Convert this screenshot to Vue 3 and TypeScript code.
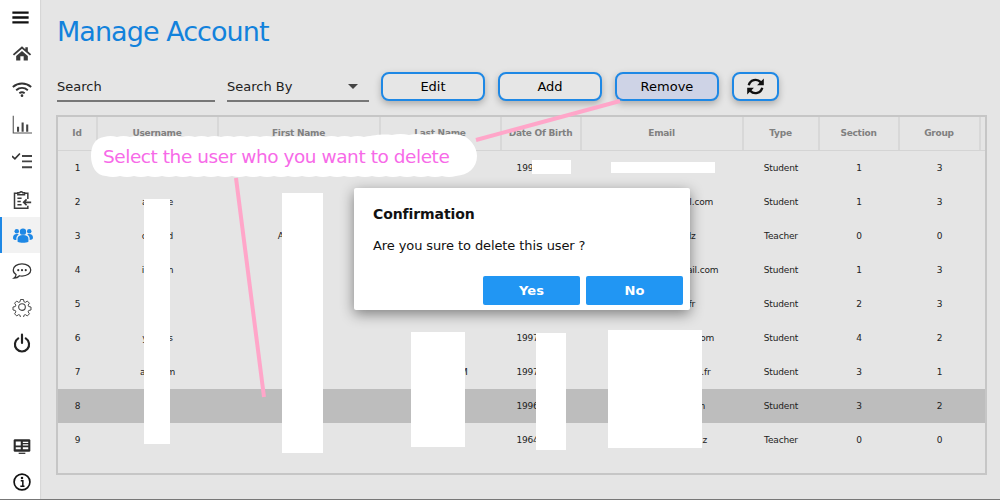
<script setup lang="ts">
interface User {
  id: number;
  username: string;
  firstName: string;
  lastName: string;
  birth: string;
  email: string;
  type: string;
  section: number;
  group: number;
}

const columns = ['Id', 'Username', 'First Name', 'Last Name', 'Date Of Birth', 'Email', 'Type', 'Section', 'Group'];

// the x's sit under the white blocks, the real values are hidden in the reference too
const users: User[] = [
  { id: 1, username: '', firstName: '', lastName: '', birth: '199x-xx-xx', email: 'xxxxxxxxxxxxxxxxxx', type: 'Student', section: 1, group: 3 },
  { id: 2, username: 'axxxxe', firstName: '', lastName: '', birth: '', email: 'xxxxxxxxxx@xxxil.com', type: 'Student', section: 1, group: 3 },
  { id: 3, username: 'oxxxxd', firstName: 'Abxxxxxx', lastName: '', birth: '', email: 'xxxxxxxxxxxdz', type: 'Teacher', section: 0, group: 0 },
  { id: 4, username: 'ixxxxm', firstName: '', lastName: '', birth: '', email: 'xxxxxxxxxxxx@xxail.com', type: 'Student', section: 1, group: 3 },
  { id: 5, username: '', firstName: '', lastName: '', birth: '', email: 'xxxxxxxxxxx.fr', type: 'Student', section: 2, group: 3 },
  { id: 6, username: 'yxxxxs', firstName: '', lastName: '', birth: '1997-xx-xx', email: 'xxxxxxxxxxxxxxxx.com', type: 'Student', section: 4, group: 2 },
  { id: 7, username: 'abxxxm', firstName: '', lastName: 'xxxxxxxxxM', birth: '1997-xx-xx', email: 'xxxxxxxxxxxxxxxxx.fr', type: 'Student', section: 3, group: 1 },
  { id: 8, username: '', firstName: '', lastName: '', birth: '1996-xx-xx', email: 'xxxxxxxxxxxxxxxm', type: 'Student', section: 3, group: 2 },
  { id: 9, username: '', firstName: '', lastName: '', birth: '1964-xx-xx', email: 'xxxxxxxxxxxxxxxx.z', type: 'Teacher', section: 0, group: 0 },
];

// white blocks painted over personal data in the screenshot
const redactions = [
  { left: 144, top: 199, width: 26, height: 245 },
  { left: 282, top: 193, width: 41, height: 260 },
  { left: 411, top: 332, width: 54, height: 115 },
  { left: 536, top: 333, width: 30, height: 117 },
  { left: 608, top: 330, width: 94, height: 118 },
  { left: 532, top: 160, width: 39, height: 14 },
  { left: 611, top: 162, width: 104, height: 11 },
];

function px(r: { left: number; top: number; width: number; height: number }) {
  return { left: `${r.left}px`, top: `${r.top}px`, width: `${r.width}px`, height: `${r.height}px` };
}

// hand drawn looking cloud behind the hint text
const cloud = 'M104 137 '
  + 'q6.500 -2 13 0 '.repeat(20)
  + 'C376 135 382 134 392 135 '
  + 'q8.500 -2 17 0 '.repeat(4)
  + 'C470 137 477 147 477 156 C477 168 468 175 456 176 '
  + 'q-7 2 -14 0 '.repeat(25)
  + 'C96 176 91 166 91 156 C91 146 95 138 104 137 Z';
</script>

<template>
  <div class="screen">
    <aside class="sidebar">
      <svg class="nav-icon menu" viewBox="0 0 20 16"><path d="M0 2h20M0 8h20M0 14h20" stroke="#111" stroke-width="3" fill="none" /></svg>
      <svg class="nav-icon" viewBox="0 0 24 24"><path d="M12 4 1 13.500l1.500 1.500L12 7l9.500 8 1.500-1.500-4-3.500V5h-3v2.500z M5 15.500 12 9.500l7 6V21h-5v-5h-4v5H5z" fill="#3a3a3a" /></svg>
      <svg class="nav-icon" viewBox="0 0 24 24"><g fill="none" stroke="#333" stroke-width="2.300"><path d="M1 9.500c6.500-5.500 15.500-5.500 22 0" /><path d="M5 13.500c4.200-3.500 9.800-3.500 14 0" /><path d="M8.800 17c2-1.500 4.400-1.500 6.400 0" /></g><circle cx="12" cy="20" r="1.600" fill="#333" /></svg>
      <svg class="nav-icon" viewBox="0 0 24 24"><path d="M1.500 1v20.500H24" stroke="#555" stroke-width="1.300" fill="none" /><path d="M6 14h2.500v6H6zM11.500 9h2.500v11h-2.500zM17 11.500h2.500V20H17z" fill="#444" /></svg>
      <svg class="nav-icon checks" viewBox="0 0 24 24"><path d="M0 6l3.500 3.500L9.500 3" stroke="#333" stroke-width="2" fill="none" /><path d="M12 6h12M12 12.500h12M12 19.500h12" stroke="#444" stroke-width="2.200" fill="none" /></svg>
      <svg class="nav-icon" viewBox="0 0 24 24"><g fill="none" stroke="#3a3a3a" stroke-width="1.800"><path d="M19 12V5h-4M7 5H3v18h16v-3" /><path d="M7 7V4.500h2.200a2 2 0 0 1 3.600 0H15V7z" /><path d="M6.500 11h5M6.500 15h4M6.500 19h5" /><path d="M23 16h-9M17.500 12.500 14 16l3.500 3.500" stroke-width="2" /></g></svg>
      <div class="nav-item active">
        <svg class="nav-icon" viewBox="0 0 24 24"><g fill="#1e88e5"><circle cx="12" cy="8" r="3.800" /><circle cx="4.500" cy="7.500" r="2.700" /><circle cx="19.500" cy="7.500" r="2.700" /><path d="M5.500 20v-3.500c0-3 2.500-4.500 6.500-4.500s6.500 1.500 6.500 4.500V20c-3 1.600-10 1.600-13 0z" /><path d="M0 15.500c0-3 1.500-4.700 4.500-4.700 1 0 1.800.2 2.400.5-1.800 1-2.900 2.700-2.900 5v1.700C2 18.200 0 17.500 0 15.500zM24 15.500c0-3-1.500-4.700-4.500-4.700-1 0-1.800.2-2.400.5 1.800 1 2.900 2.700 2.900 5v1.700c2-.3 4-1 4-2.500z" /></g></svg>
      </div>
      <svg class="nav-icon" viewBox="0 0 24 24"><path d="M12 3.500c6 0 10.500 3 10.500 7.300S18 18 12 18c-1 0-2 0-3-.3C7.500 19.500 5 20.500 2.500 20.500c1.500-1 2.300-2.500 2.400-4.300C2.800 15 1.500 13 1.500 10.800 1.500 6.500 6 3.500 12 3.500z" fill="none" stroke="#333" stroke-width="1.500" /><g fill="#333"><circle cx="7.500" cy="11" r="1.300" /><circle cx="12" cy="11" r="1.300" /><circle cx="16.500" cy="11" r="1.300" /></g></svg>
      <svg class="nav-icon" viewBox="0 0 24 24"><g fill="none" stroke="#444" stroke-width="1.300"><path d="M10 2h4l.6 3 1.900.8 2.600-1.700 2.800 2.800-1.700 2.600.8 1.900 3 .6v4l-3 .6-.8 1.900 1.700 2.600-2.800 2.800-2.600-1.700-1.900.8-.6 3h-4l-.6-3-1.900-.8-2.600 1.700-2.800-2.800 1.700-2.600-.8-1.900-3-.6v-4l3-.6.800-1.900-1.700-2.600 2.800-2.800 2.600 1.700 1.900-.8z" transform="translate(1.200 1.200) scale(.9)" /><circle cx="12" cy="12" r="4" /></g></svg>
      <svg class="nav-icon" viewBox="0 0 24 24"><path d="M7.500 6.500a8.500 8.500 0 1 0 9 0" fill="none" stroke="#222" stroke-width="2.600" stroke-linecap="round" /><path d="M12 2v10" stroke="#222" stroke-width="2.600" stroke-linecap="round" /></svg>
      <div class="spacer" />
      <svg class="nav-icon" viewBox="0 0 24 24"><rect x="2" y="4" width="20" height="15" rx="1.500" fill="#2b2b2b" /><path d="M4.500 6.500h6v5h-6zM13 7h6.500v1.500H13zM13 10h6.500v1.500H13zM4.500 13.500h6V16h-6zM13 13.500h6.500V16H13z" fill="#fff" /><path d="M8 20h8v1.500H8z" fill="#2b2b2b" /></svg>
      <svg class="nav-icon last" viewBox="0 0 24 24"><circle cx="12" cy="12" r="9.500" fill="none" stroke="#111" stroke-width="2" /><path d="M10.500 10.500h2.500v6.500M10 17h5" stroke="#111" stroke-width="1.800" fill="none" /><circle cx="12" cy="7.300" r="1.500" fill="#111" /></svg>
    </aside>

    <main class="content">
      <h1 class="title">Manage Account</h1>

      <div class="toolbar">
        <div class="field search">Search</div>
        <div class="field search-by">
          <span>Search By</span>
          <i class="caret" />
        </div>
        <button class="btn">Edit</button>
        <button class="btn">Add</button>
        <button class="btn selected">Remove</button>
        <button class="btn refresh">
          <svg viewBox="0 0 24 24" width="19" height="19"><g fill="none" stroke="#111" stroke-width="3"><path d="M3.500 10.500a8.800 8.800 0 0 1 15-4l2 2" /><path d="M20.500 13.500a8.800 8.800 0 0 1-15 4l-2-2" /></g><path d="M22.500 2v8.500H14zM1.500 22v-8.500H10z" fill="#111" /></svg>
        </button>
      </div>

      <div class="table">
        <div class="row head">
          <div v-for="c in columns" :key="c" class="cell">{{ c }}</div>
          <div class="cell filler" />
        </div>
        <div v-for="u in users" :key="u.id" class="row" :class="{ picked: u.id === 8 }">
          <div class="cell">{{ u.id }}</div>
          <div class="cell">{{ u.username }}</div>
          <div class="cell">{{ u.firstName }}</div>
          <div class="cell">{{ u.lastName }}</div>
          <div class="cell">{{ u.birth }}</div>
          <div class="cell">{{ u.email }}</div>
          <div class="cell">{{ u.type }}</div>
          <div class="cell">{{ u.section }}</div>
          <div class="cell">{{ u.group }}</div>
          <div class="cell filler" />
        </div>
      </div>
    </main>

    <div v-for="(r, i) in redactions" :key="i" class="redact" :style="px(r)" />

    <svg class="lines" width="1000" height="500">
      <path d="M620 101 476 140M236 178 264 397" stroke="#ffa6c9" stroke-width="4" fill="none" />
      <path :d="cloud" fill="#fff" />
    </svg>
    <div class="bubble">Select the user who you want to delete</div>

    <div class="dialog">
      <div class="dialog-title">Confirmation</div>
      <div class="dialog-text">Are you sure to delete this user ?</div>
      <div class="dialog-actions">
        <button class="dialog-btn">Yes</button>
        <button class="dialog-btn">No</button>
      </div>
    </div>
  </div>
</template>

<style>
body {
  margin: 0;
}
</style>

<style scoped>
.screen {
  position: relative;
  display: flex;
  width: 1000px;
  height: 500px;
  overflow: hidden;
  background: #e5e5e5;
  border-bottom: 1px solid #777;
  box-sizing: border-box;
  font-family: "DejaVu Sans", sans-serif;
  color: #222;
}

.sidebar {
  width: 40px;
  flex-shrink: 0;
  background: #fff;
  display: flex;
  flex-direction: column;
  align-items: center;
  padding: 11px 0 0 4px;
  box-sizing: border-box;
  gap: 16px;
  box-shadow: 1px 0 1px rgba(0, 0, 0, 0.06);
}

.nav-icon {
  width: 20px;
  height: 20px;
  flex-shrink: 0;
}

.nav-icon.menu {
  width: 17px;
  height: 13px;
  margin-right: 4px;
  margin-bottom: 3px;
}

.nav-icon.checks {
  margin-bottom: 2px;
}

.nav-icon.last {
  margin-bottom: 7px;
}

.nav-item {
  align-self: stretch;
  height: 36px;
  margin: -8px 0 -8px -4px;
  padding-left: 3px;
  display: flex;
  align-items: center;
  justify-content: center;
  background: #f2f2f2;
  border-left: 2px solid #1e88e5;
}

.spacer {
  flex: 1;
}

.content {
  flex: 1;
  padding: 0 14px 0 17px;
}

.title {
  margin: 0;
  padding-top: 15px;
  font-size: 27px;
  line-height: 34px;
  font-weight: 400;
  letter-spacing: -0.95px;
  color: #1282dc;
}

.toolbar {
  display: flex;
  align-items: flex-start;
  margin-top: 23px;
  height: 43px;
}

.field {
  height: 30px;
  line-height: 29px;
  font-size: 13px;
  border-bottom: 2px solid #777;
  box-sizing: border-box;
}

.search {
  width: 158px;
  margin-right: 12px;
}

.search-by {
  width: 142px;
  margin-right: 12px;
  display: flex;
  justify-content: space-between;
  align-items: center;
  padding-right: 11px;
}

.caret {
  width: 0;
  height: 0;
  border: 5px solid transparent;
  border-top-color: #444;
  border-bottom: 0;
}

.btn {
  width: 104px;
  height: 29px;
  margin-right: 13px;
  border: 2px solid #1e88e5;
  border-radius: 8px;
  background: #e6e6e6;
  box-shadow: 0 3px 7px rgba(0, 0, 0, 0.25);
  font-family: inherit;
  font-size: 13px;
  color: #000;
  padding: 0;
}

.btn.selected {
  background: #ced3e6;
}

.btn.refresh {
  width: 47px;
  margin-right: 0;
  display: flex;
  align-items: center;
  justify-content: center;
}

.table {
  width: 931px;
  height: 360px;
  margin-left: -1px;
  border: 2px solid #c6c6c6;
  box-sizing: border-box;
  font-size: 9px;
  letter-spacing: -0.15px;
}

.row {
  display: grid;
  grid-template-columns: 39px 121px 162px 121px 80px 162px 76px 80px 81px 1fr;
  height: 34px;
  align-items: center;
  text-align: center;
}

.row.head {
  height: 33px;
  align-items: stretch;
  border-bottom: 1px solid #d4d4d4;
  font-weight: 700;
  letter-spacing: -0.25px;
  color: #808080;
}

.row.head .cell {
  line-height: 32px;
  border-right: 1px solid #d8d8d8;
  box-shadow: 1px 0 0 #d8d8d8;
}

.row.head .filler {
  border-right: 0;
  box-shadow: none;
}

.row.picked {
  background: #bdbdbd;
}

.redact {
  position: absolute;
  background: #fff;
}

.lines {
  position: absolute;
  left: 0;
  top: 0;
  pointer-events: none;
}

.bubble {
  position: absolute;
  left: 103px;
  top: 136px;
  height: 41px;
  color: #f76ae8;
  font-size: 18.500px;
  letter-spacing: -0.450px;
  line-height: 41px;
  white-space: nowrap;
}

.dialog {
  position: absolute;
  left: 354px;
  top: 188px;
  width: 336px;
  height: 122px;
  background: #fff;
  border-radius: 2px;
  box-shadow: 0 4px 14px rgba(0, 0, 0, 0.45);
  box-sizing: border-box;
  padding: 18px 7px 5px 19px;
  display: flex;
  flex-direction: column;
  color: #111;
}

.dialog-title {
  font-size: 14px;
  font-weight: 700;
  letter-spacing: -0.1px;
  line-height: 17px;
}

.dialog-text {
  font-size: 13px;
  letter-spacing: -0.1px;
  line-height: 16px;
  margin-top: 15px;
}

.dialog-actions {
  margin-top: auto;
  display: flex;
  justify-content: flex-end;
  gap: 6px;
}

.dialog-btn {
  width: 97px;
  height: 29px;
  border: 0;
  border-radius: 2px;
  background: #2196f3;
  color: #fff;
  font-family: inherit;
  font-size: 13px;
  font-weight: 700;
  padding: 0;
}
</style>
